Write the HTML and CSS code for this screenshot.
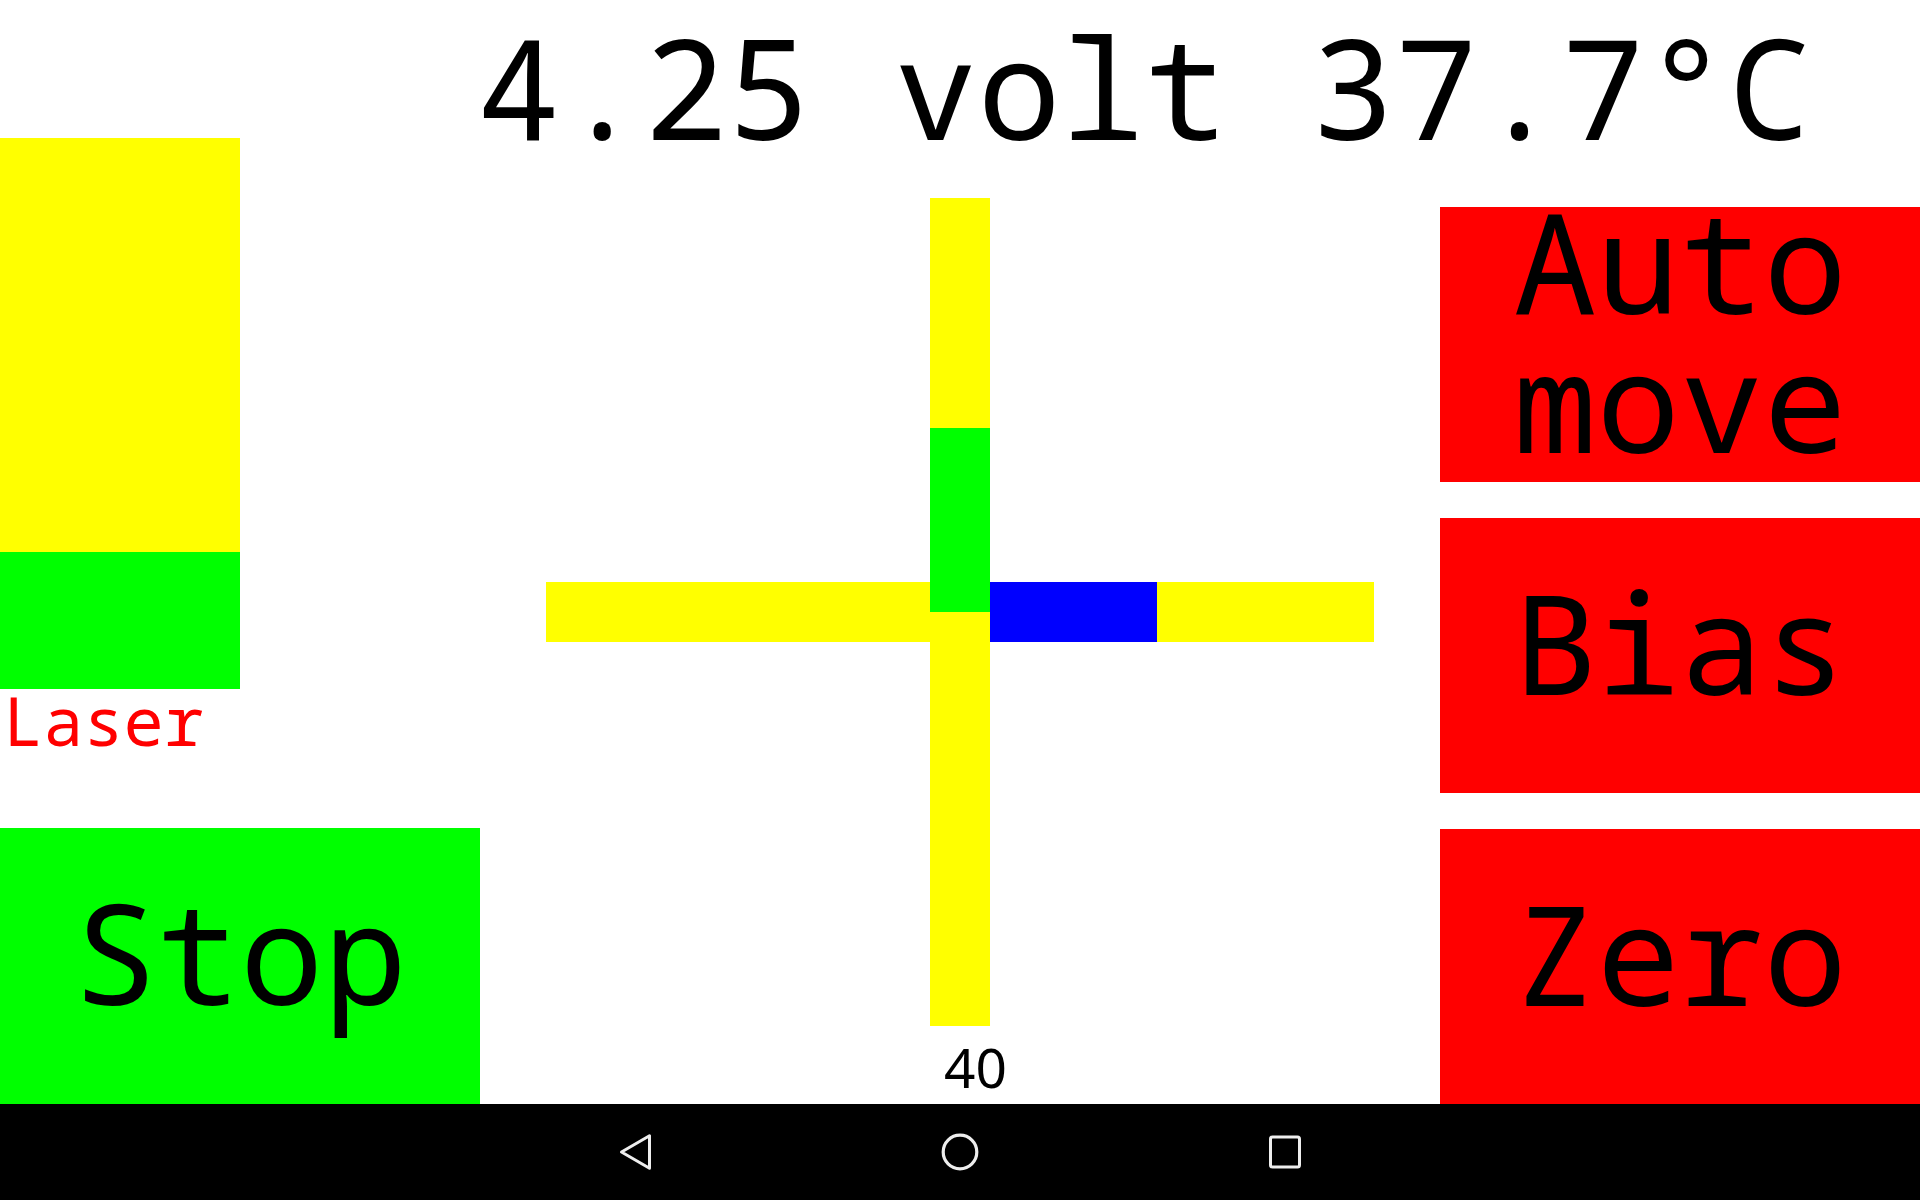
FILE: index.html
```html
<!DOCTYPE html>
<html lang="en">
<head>
<meta charset="utf-8">
<title>Laser control</title>
<link rel="stylesheet" href="styles.css">
</head>
<body>
<div class="screen">
  <div class="app">
    <header class="status">
      <span class="status-text">4.25 volt 37.7°C</span>
    </header>
    <div class="panel">
      <div class="col col-left">
        <div class="laser-bar">
          <div class="laser-bar-rest"></div>
          <div class="laser-bar-level"></div>
        </div>
        <div class="laser-label">Laser</div>
        <div class="btn btn-green btn-stop">Stop</div>
      </div>
      <div class="col col-center">
        <div class="cross">
          <div class="cross-h">
            <div class="cross-h-left"></div>
            <div class="cross-h-value"></div>
            <div class="cross-h-right"></div>
          </div>
          <div class="cross-v">
            <div class="cross-v-top"></div>
            <div class="cross-v-value"></div>
            <div class="cross-v-bottom"></div>
          </div>
        </div>
        <div class="cross-label">40</div>
      </div>
      <div class="col col-right">
        <div class="btn btn-red">Auto<br>move</div>
        <div class="btn btn-red">Bias</div>
        <div class="btn btn-red btn-last">Zero</div>
      </div>
    </div>
  </div>
  <nav class="navbar">
    <div class="nav-icon">
      <svg width="48" height="48" viewBox="0 0 48 48"><path d="M10.5 24 L38.5 7.8 L38.5 40.2 Z" fill="none" stroke="#eeeeee" stroke-width="3" stroke-linejoin="round"/></svg>
    </div>
    <div class="nav-icon">
      <svg width="48" height="48" viewBox="0 0 48 48"><circle cx="24" cy="24" r="16.8" fill="none" stroke="#eeeeee" stroke-width="3.2"/></svg>
    </div>
    <div class="nav-icon">
      <svg width="48" height="48" viewBox="0 0 48 48"><rect x="9.5" y="9" width="29" height="30" rx="2" ry="2" fill="none" stroke="#eeeeee" stroke-width="3"/></svg>
    </div>
  </nav>
</div>
</body>
</html>
```
FILE: styles.css
```css
* { box-sizing: border-box; }

html, body {
  margin: 0;
  padding: 0;
  background: #ffffff;
}

body {
  font-family: "Noto Sans Mono", "Droid Sans Mono", "DejaVu Sans Mono", monospace;
  color: #000000;
}

.screen {
  width: 1920px;
  height: 1200px;
  display: flex;
  flex-direction: column;
  overflow: hidden;
}

.app {
  height: 1104px;
  flex: none;
  display: flex;
  flex-direction: column;
}

/* header text */
.status {
  height: 138px;
  flex: none;
  padding: 17px 0 0 477px;
}

.status-text {
  display: block;
  font-size: 139px;
  line-height: 139px;
  white-space: pre;
}

/* main panel */
.panel {
  flex: 1;
  min-height: 0;
  display: grid;
  grid-template-columns: 480px 960px 480px;
  grid-template-rows: 966px;
}

.col {
  display: flex;
  flex-direction: column;
  min-height: 0;
}

/* left */
.laser-bar {
  width: 240px;
  height: 551px;
  flex: none;
  display: flex;
  flex-direction: column;
}

.laser-bar-rest {
  height: 414px;
  background: #ffff00;
}

.laser-bar-level {
  flex: 1;
  background: #00ff00;
}

.laser-label {
  color: #ff0000;
  font-size: 67px;
  line-height: 62px;
  padding-left: 3px;
}

.btn {
  display: flex;
  align-items: center;
  justify-content: center;
  text-align: center;
  font-size: 139px;
  line-height: 139px;
  padding-bottom: 29px;
  white-space: nowrap;
}

.btn-green {
  background: #00ff00;
}

.btn-red {
  background: #ff0000;
  height: 275px;
  flex: none;
}

.btn-stop {
  margin-top: auto;
  height: 276px;
  flex: none;
}

/* center cross */
.col-center {
  align-items: center;
}

.cross {
  margin-top: 60px;
  width: 828px;
  height: 828px;
  flex: none;
  display: grid;
  grid-template-columns: 1fr;
  grid-template-rows: 1fr;
  place-items: center;
}

.cross-h, .cross-v {
  grid-row: 1;
  grid-column: 1;
  display: flex;
}

.cross-h {
  width: 828px;
  height: 60px;
  flex-direction: row;
}

.cross-h-left {
  width: 414px;
  background: #ffff00;
}

.cross-h-value {
  width: 197px;
  background: #0000ff;
}

.cross-h-right {
  flex: 1;
  background: #ffff00;
}

.cross-v {
  width: 60px;
  height: 828px;
  flex-direction: column;
}

.cross-v-top {
  height: 230px;
  background: #ffff00;
}

.cross-v-value {
  height: 184px;
  background: #00ff00;
}

.cross-v-bottom {
  flex: 1;
  background: #ffff00;
}

.cross-label {
  align-self: flex-start;
  padding-left: 464px;
  margin-top: 13px;
  font-family: "Noto Sans", "Open Sans", sans-serif;
  font-size: 55px;
  line-height: 55px;
}

/* right */
.col-right {
  padding-top: 69px;
  gap: 36px;
}

.btn-last {
  height: auto;
  flex: 1;
}

/* navigation bar */
.navbar {
  height: 96px;
  flex: none;
  background: #000000;
  display: flex;
  align-items: center;
  justify-content: center;
  gap: 277px;
}

.nav-icon {
  width: 48px;
  height: 48px;
  display: flex;
}

.nav-icon svg {
  display: block;
}
```
